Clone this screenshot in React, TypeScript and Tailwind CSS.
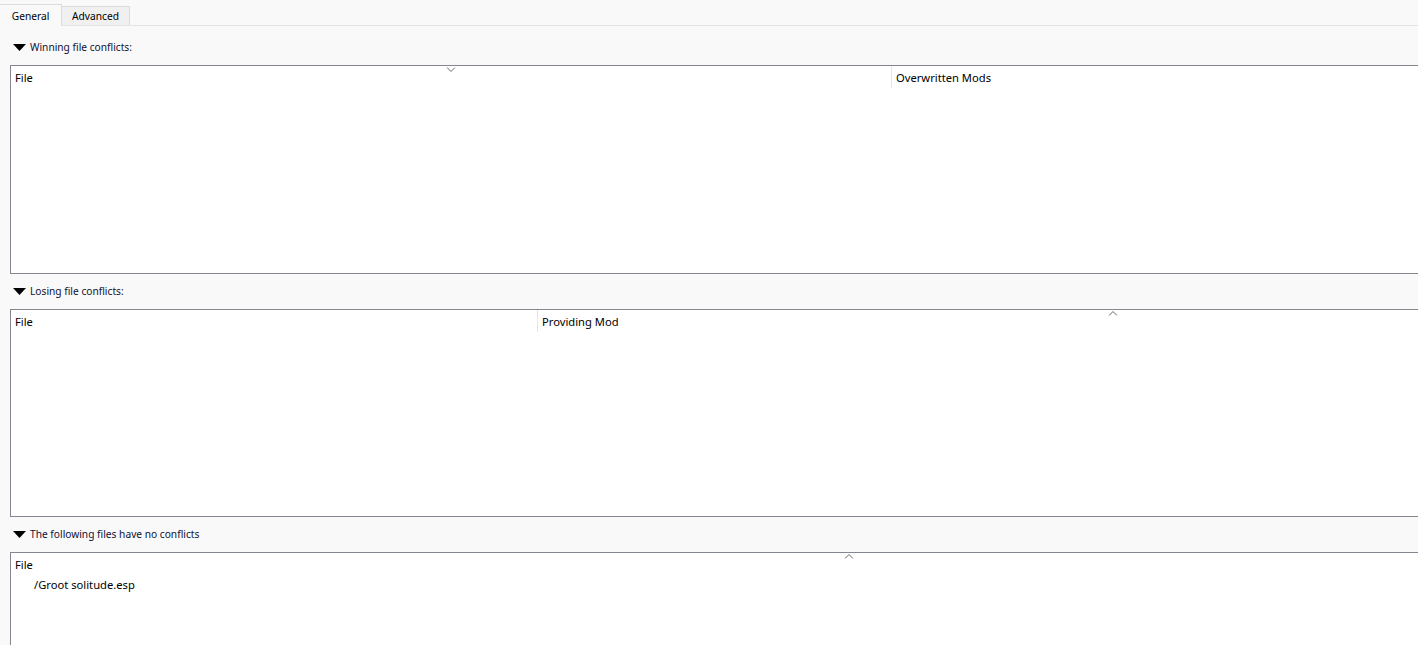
import React from "react";

const font = { fontFamily: '"Segoe UI", "Noto Sans", "Open Sans", sans-serif' };

function Chevron({ up }: { up?: boolean }) {
  return (
    <svg width="9" height="5" viewBox="0 0 9 5" className="block">
      {up ? (
        <polyline points="0.5,4.5 4.5,0.5 8.5,4.5" fill="none" stroke="#666" strokeWidth="1" />
      ) : (
        <polyline points="0.5,0.5 4.5,4.5 8.5,0.5" fill="none" stroke="#666" strokeWidth="1" />
      )}
    </svg>
  );
}

function Triangle() {
  return (
    <svg width="13" height="7" viewBox="0 0 13 7" className="block">
      <polygon points="0,0 13,0 6.5,7" fill="#000" />
    </svg>
  );
}

function Label({ text }: { text: string }) {
  return (
    <div className="flex h-[35px] items-center gap-[4px] pl-[3px]">
      <Triangle />
      <span className="pt-[1px] text-[10.2px] text-[#111133]">{text}</span>
    </div>
  );
}

type Col = { name: string; width: number; sort?: "up" | "down" };

function Table({
  cols,
  height,
  rows = [],
}: {
  cols: Col[];
  height: number;
  rows?: string[];
}) {
  return (
    <div
      className="w-[1678px] shrink-0 border border-[#828790] bg-white"
      style={{ height }}
    >
      <div className="flex h-[22px]">
        {cols.map((c, i) => (
          <div
            key={c.name}
            className={
              "relative flex h-[22px] shrink-0 items-center pl-[4px] text-[11.2px] text-black " +
              (i < cols.length - 1 ? "border-r border-[#e5e5e5]" : "")
            }
            style={{ width: c.width }}
          >
            {c.sort && (
              <div className="absolute left-1/2 top-[1px] -translate-x-1/2">
                <Chevron up={c.sort === "up"} />
              </div>
            )}
            <span className="mt-[3px]">{c.name}</span>
          </div>
        ))}
      </div>
      {rows.map((r) => (
        <div key={r} className="flex h-[20px] items-center pl-[23px] text-[11.2px] text-black">
          {r}
        </div>
      ))}
    </div>
  );
}

export default function App() {
  return (
    <div className="h-[645px] w-[1418px] overflow-hidden bg-[#f9f9f9]" style={font}>
      <div className="relative flex h-[26px] items-end border-b border-[#e3e3e3]">
        <div className="relative z-10 -mb-px flex h-[22px] w-[62px] items-center justify-center border-r border-t border-[#dcdcdc] bg-[#f9f9f9] pt-[3px] text-[10.2px] text-black">
          General
        </div>
        <div className="flex h-[19px] w-[68px] items-center justify-center border-r border-t border-[#dcdcdc] bg-[#f0f0f0] pt-[2px] text-[10.2px] text-black">
          Advanced
        </div>
      </div>
      <div className="flex flex-col pl-[10px] pt-[4px]">
        <Label text="Winning file conflicts:" />
        <Table
          height={209}
          cols={[
            { name: "File", width: 881, sort: "down" },
            { name: "Overwritten Mods", width: 795 },
          ]}
        />
        <Label text="Losing file conflicts:" />
        <Table
          height={208}
          cols={[
            { name: "File", width: 527 },
            { name: "Providing Mod", width: 1149, sort: "up" },
          ]}
        />
        <Label text="The following files have no conflicts" />
        <Table
          height={200}
          cols={[{ name: "File", width: 1676, sort: "up" }]}
          rows={["/Groot solitude.esp"]}
        />
      </div>
    </div>
  );
}
